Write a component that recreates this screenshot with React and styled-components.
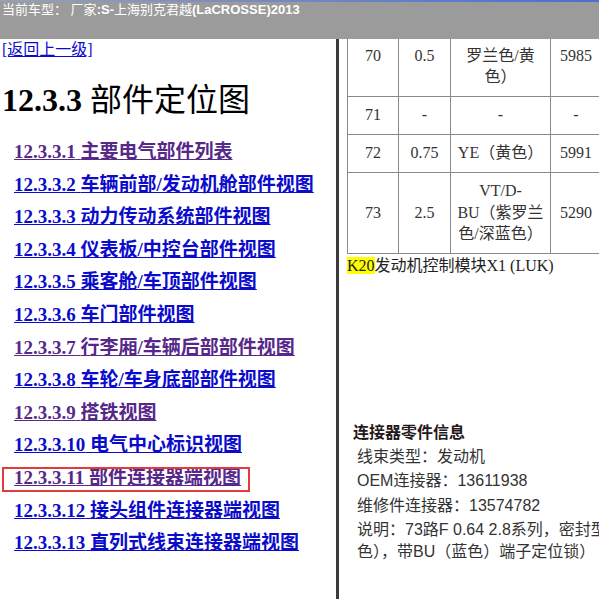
import React from "react";
import styled, { createGlobalStyle } from "styled-components";

const GlobalStyle = createGlobalStyle`
  html, body { margin: 0; padding: 0; background: #ffffff; }
  body { width: 599px; height: 599px; overflow: hidden; }
`;

const SERIF = `"Liberation Serif", "Noto Sans CJK SC", serif`;
const SANS = `"Liberation Sans", "Noto Sans CJK SC", sans-serif`;

const Page = styled.div`
  width: 599px;
  height: 599px;
  display: flex;
  flex-direction: column;
  overflow: hidden;
`;

const TitleBar = styled.header`
  flex: none;
  height: 39px;
  box-sizing: border-box;
  padding: 2px 0 0 2px;
  background: linear-gradient(to right, #9aa0b4, #4a6fd0) top left / 100% 2px no-repeat, #9b9b9b;
  color: #ffffff;
  font-family: ${SANS};
  font-size: 13px;
  line-height: 16px;
  white-space: nowrap;
`;

const Strong = styled.span`
  font-weight: 700;
`;

const Frames = styled.div`
  flex: 1;
  min-height: 0;
  display: flex;
`;

const LeftFrame = styled.nav`
  flex: none;
  width: 339px;
  box-sizing: border-box;
  padding: 1px 0 0 2px;
  border-right: 3px solid #3b3b3b;
  overflow: hidden;
  font-family: ${SERIF};
`;

const BackRow = styled.div`
  font-size: 16px;
  line-height: 20px;
`;

const Link = styled.a`
  color: ${(p) => (p.$visited ? "#56288a" : "#0b0bcc")};
  text-decoration: underline;
  cursor: pointer;
`;

const Heading = styled.h1`
  margin: 20px 0 0;
  font-size: 32px;
  line-height: 40px;
  font-weight: 700;
  color: #000000;
  white-space: nowrap;
`;

const HeadingText = styled.span`
  font-weight: 400;
`;

const TocList = styled.ul`
  list-style: none;
  margin: 16px 0 0;
  padding: 0 0 0 12px;
`;

const TocItem = styled.li`
  position: relative;
  font-size: 19px;
  line-height: 32.6px;
  font-weight: 700;
  white-space: nowrap;

  &::after {
    content: "";
    display: ${(p) => (p.$marked ? "block" : "none")};
    position: absolute;
    left: -12px;
    top: 5px;
    width: 248px;
    height: 25px;
    box-sizing: border-box;
    border: 2px solid #e23b3b;
    pointer-events: none;
  }
`;

const RightFrame = styled.section`
  flex: 1;
  min-width: 0;
  overflow: hidden;
  padding-left: 8px;
`;

const Sheet = styled.div`
  width: 420px;
`;

const PinTable = styled.table`
  margin-top: -3px;
  border-collapse: collapse;
  table-layout: fixed;
  width: 254px;
  font-family: ${SERIF};
  font-size: 16px;
  line-height: 21.5px;
  color: #333333;
`;

const Cell = styled.td`
  border: 1px solid #8a8a8a;
  padding: 7.75px 0;
  text-align: center;
  vertical-align: ${(p) => (p.$top ? "top" : "middle")};
`;

const ModuleLine = styled.div`
  margin-top: 2px;
  font-family: ${SERIF};
  font-size: 16px;
  line-height: 20px;
  color: #222222;
  white-space: nowrap;
`;

const Mark = styled.span`
  background: #ffff00;
`;

const InfoBlock = styled.div`
  margin: 145px 0 0 6px;
  font-family: ${SANS};
  color: #333333;
`;

const InfoTitle = styled.div`
  font-size: 16px;
  line-height: 24px;
  font-weight: 700;
  color: #241818;
`;

const InfoRow = styled.div`
  padding-left: 4px;
  font-size: 16px;
  line-height: 24.5px;
  white-space: nowrap;
`;

const InfoNote = styled.div`
  padding-left: 4px;
  font-size: 16px;
  line-height: 22px;
  margin-top: 1px;
  white-space: nowrap;
`;

const tocEntries = [
  { no: "12.3.3.1", title: "主要电气部件列表", visited: true },
  { no: "12.3.3.2", title: "车辆前部/发动机舱部件视图" },
  { no: "12.3.3.3", title: "动力传动系统部件视图" },
  { no: "12.3.3.4", title: "仪表板/中控台部件视图" },
  { no: "12.3.3.5", title: "乘客舱/车顶部件视图" },
  { no: "12.3.3.6", title: "车门部件视图" },
  { no: "12.3.3.7", title: "行李厢/车辆后部部件视图", visited: true },
  { no: "12.3.3.8", title: "车轮/车身底部部件视图" },
  { no: "12.3.3.9", title: "搭铁视图", visited: true },
  { no: "12.3.3.10", title: "电气中心标识视图" },
  { no: "12.3.3.11", title: "部件连接器端视图", visited: true, marked: true },
  { no: "12.3.3.12", title: "接头组件连接器端视图" },
  { no: "12.3.3.13", title: "直列式线束连接器端视图" },
];

// pin rows of the connector; the first row is scrolled partly under the title bar
const pinRows = [
  { pin: "70", size: "0.5", color: ["罗兰色/黄", "色）"], circuit: "5985", top: true },
  { pin: "71", size: "-", color: ["-"], circuit: "-" },
  { pin: "72", size: "0.75", color: ["YE（黄色）"], circuit: "5991" },
  { pin: "73", size: "2.5", color: ["VT/D-", "BU（紫罗兰", "色/深蓝色）"], circuit: "5290" },
];

export default function App() {
  return (
    <>
      <GlobalStyle />
      <Page>
        <TitleBar>
          当前车型： 厂家<Strong>:S-</Strong>上海别克君越<Strong>(LaCROSSE)2013</Strong>
        </TitleBar>
        <Frames>
          <LeftFrame>
            <BackRow>
              <Link>[返回上一级]</Link>
            </BackRow>
            <Heading>
              12.3.3 <HeadingText>部件定位图</HeadingText>
            </Heading>
            <TocList>
              {tocEntries.map((e) => (
                <TocItem key={e.no} $marked={e.marked}>
                  <Link $visited={e.visited}>
                    {e.no} {e.title}
                  </Link>
                </TocItem>
              ))}
            </TocList>
          </LeftFrame>
          <RightFrame>
            <Sheet>
              <PinTable>
                <colgroup>
                  <col style={{ width: 51 }} />
                  <col style={{ width: 52 }} />
                  <col style={{ width: 100 }} />
                  <col style={{ width: 51 }} />
                </colgroup>
                <tbody>
                  {pinRows.map((r) => (
                    <tr key={r.pin}>
                      <Cell $top={r.top}>{r.pin}</Cell>
                      <Cell $top={r.top}>{r.size}</Cell>
                      <Cell $top={r.top}>
                        {r.color.map((line, i) => (
                          <React.Fragment key={i}>
                            {i > 0 && <br />}
                            {line}
                          </React.Fragment>
                        ))}
                      </Cell>
                      <Cell $top={r.top}>{r.circuit}</Cell>
                    </tr>
                  ))}
                </tbody>
              </PinTable>
              <ModuleLine>
                <Mark>K20</Mark>发动机控制模块X1 (LUK)
              </ModuleLine>
              <InfoBlock>
                <InfoTitle>连接器零件信息</InfoTitle>
                <InfoRow>线束类型：发动机</InfoRow>
                <InfoRow>OEM连接器：13611938</InfoRow>
                <InfoRow>维修件连接器：13574782</InfoRow>
                <InfoNote>
                  说明：73路F 0.64 2.8系列，密封型（黑
                  <br />
                  色），带BU（蓝色）端子定位锁）
                </InfoNote>
              </InfoBlock>
            </Sheet>
          </RightFrame>
        </Frames>
      </Page>
    </>
  );
}
